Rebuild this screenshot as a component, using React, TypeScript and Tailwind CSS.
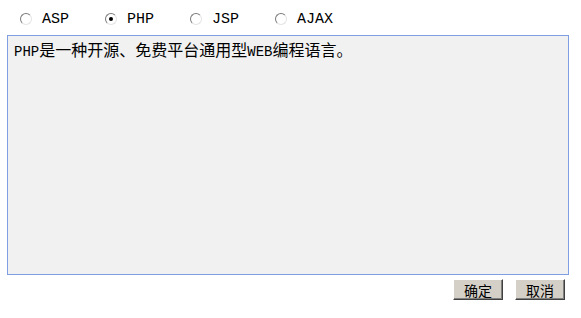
import { useState } from "react"

const options = ["ASP", "PHP", "JSP", "AJAX"]

const descriptions: Record<string, [string, string][]> = {
  PHP: [
    ["l", "PHP"],
    ["c", "是一种开源、免费平台通用型"],
    ["l", "WEB"],
    ["c", "编程语言。"],
  ],
}

function Radio({ checked }: { checked: boolean }) {
  return (
    <span className="flex h-[12px] w-[12px] items-center justify-center rounded-full border border-[#7a7a7a] border-b-[#e4e4e4] border-r-[#e4e4e4] bg-white">
      {checked && <span className="h-[4px] w-[4px] rounded-full bg-black" />}
    </span>
  )
}

export default function App() {
  const [selected, setSelected] = useState("PHP")
  const text = descriptions[selected] ?? []

  return (
    <div
      className="h-[318px] w-[581px] bg-white text-black"
      style={{ fontFamily: '"Liberation Serif", "Noto Sans CJK SC", serif' }}
    >
      <div className="flex h-[35px] items-center pl-[20px] pt-[3px]">
        {options.map((opt) => (
          <label
            key={opt}
            className="flex w-[85px] cursor-pointer items-center"
            onClick={() => setSelected(opt)}
          >
            <Radio checked={selected === opt} />
            <span className="ml-[10px] font-['Liberation_Mono'] text-[15px] leading-none">
              {opt}
            </span>
          </label>
        ))}
      </div>

      <div className="ml-[7px] h-[240px] w-[562px] border border-[#7f9ee3] bg-[#f1f1f1] px-[6px] pt-[3px] text-[16px] leading-[20px]">
        {text.map(([kind, part], i) =>
          kind === "l" ? (
            <span key={i} className="font-['Liberation_Mono'] text-[14px]">
              {part}
            </span>
          ) : (
            <span key={i} className="font-['Noto_Sans_CJK_SC']">
              {part}
            </span>
          )
        )}
      </div>

      <div className="mt-[4px] flex justify-end gap-[12px] pr-[16px]">
        {["确定", "取消"].map((label) => (
          <button
            key={label}
            className="flex h-[21px] w-[50px] items-center justify-center border border-[#ffffff] border-b-[#404040] border-r-[#404040] bg-[#d4d0c8] font-['Noto_Sans_CJK_SC'] text-[14px] leading-none shadow-[inset_-1px_-1px_0_#808080]"
          >
            {label}
          </button>
        ))}
      </div>
    </div>
  )
}
